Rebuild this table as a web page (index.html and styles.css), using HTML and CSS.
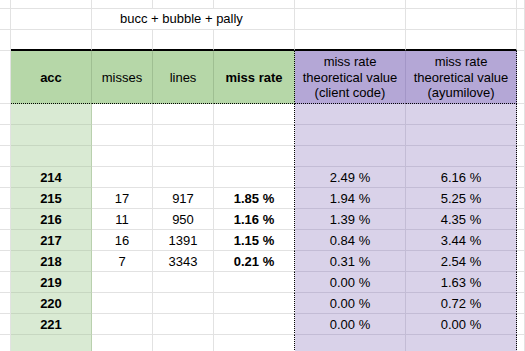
FILE: index.html
```html
<!DOCTYPE html>
<html>
<head>
<meta charset="utf-8">
<link rel="stylesheet" href="styles.css">
</head>
<body>
<div class="sheet">
  <div class="row r-top">
    <div class="c"></div><div class="c"></div><div class="c"></div><div class="c"></div><div class="c"></div><div class="c"></div><div class="c"></div><div class="c"></div>
  </div>
  <div class="row r-std">
    <div class="c"></div><div class="c"></div>
    <div class="c title">bucc + bubble + pally</div>
    <div class="c"></div><div class="c"></div><div class="c"></div>
  </div>
  <div class="row r-std">
    <div class="c"></div>
    <div class="c thick"></div><div class="c thick"></div><div class="c thick"></div><div class="c thick"></div><div class="c thick"></div><div class="c thick"></div>
    <div class="c"></div>
  </div>
  <div class="row r-head">
    <div class="c"></div>
    <div class="c hg b">acc</div>
    <div class="c hg">misses</div>
    <div class="c hg">lines</div>
    <div class="c hg b dl">miss rate</div>
    <div class="c hp">miss rate<br>theoretical value<br>(client code)</div>
    <div class="c hp dr">miss rate<br>theoretical value<br>(ayumilove)</div>
    <div class="c"></div>
  </div>
  <div class="row r-std"><div class="c"></div><div class="c g b"></div><div class="c"></div><div class="c"></div><div class="c dl"></div><div class="c p"></div><div class="c p dr"></div><div class="c"></div></div>
  <div class="row r-std"><div class="c"></div><div class="c g b"></div><div class="c"></div><div class="c"></div><div class="c dl"></div><div class="c p"></div><div class="c p dr"></div><div class="c"></div></div>
  <div class="row r-std"><div class="c"></div><div class="c g b"></div><div class="c"></div><div class="c"></div><div class="c dl"></div><div class="c p"></div><div class="c p dr"></div><div class="c"></div></div>
  <div class="row r-std"><div class="c"></div><div class="c g b">214</div><div class="c"></div><div class="c"></div><div class="c dl b"></div><div class="c p">2.49 %</div><div class="c p dr">6.16 %</div><div class="c"></div></div>
  <div class="row r-std"><div class="c"></div><div class="c g b">215</div><div class="c">17</div><div class="c">917</div><div class="c dl b">1.85 %</div><div class="c p">1.94 %</div><div class="c p dr">5.25 %</div><div class="c"></div></div>
  <div class="row r-std"><div class="c"></div><div class="c g b">216</div><div class="c">11</div><div class="c">950</div><div class="c dl b">1.16 %</div><div class="c p">1.39 %</div><div class="c p dr">4.35 %</div><div class="c"></div></div>
  <div class="row r-std"><div class="c"></div><div class="c g b">217</div><div class="c">16</div><div class="c">1391</div><div class="c dl b">1.15 %</div><div class="c p">0.84 %</div><div class="c p dr">3.44 %</div><div class="c"></div></div>
  <div class="row r-std"><div class="c"></div><div class="c g b">218</div><div class="c">7</div><div class="c">3343</div><div class="c dl b">0.21 %</div><div class="c p">0.31 %</div><div class="c p dr">2.54 %</div><div class="c"></div></div>
  <div class="row r-std"><div class="c"></div><div class="c g b">219</div><div class="c"></div><div class="c"></div><div class="c dl b"></div><div class="c p">0.00 %</div><div class="c p dr">1.63 %</div><div class="c"></div></div>
  <div class="row r-std"><div class="c"></div><div class="c g b">220</div><div class="c"></div><div class="c"></div><div class="c dl b"></div><div class="c p">0.00 %</div><div class="c p dr">0.72 %</div><div class="c"></div></div>
  <div class="row r-std"><div class="c"></div><div class="c g b">221</div><div class="c"></div><div class="c"></div><div class="c dl b"></div><div class="c p">0.00 %</div><div class="c p dr">0.00 %</div><div class="c"></div></div>
  <div class="row r-std"><div class="c"></div><div class="c g b"></div><div class="c"></div><div class="c"></div><div class="c dl"></div><div class="c p"></div><div class="c p dr"></div><div class="c"></div></div>
</div>
</body>
</html>
```
FILE: styles.css
```css
html, body {
  margin: 0;
  padding: 0;
  background: #ffffff;
}

.sheet {
  width: 525px;
  height: 351px;
  overflow: hidden;
  font-family: "Liberation Sans", Arial, sans-serif;
  font-size: 13px;
  color: #000000;
}

.row {
  display: grid;
  grid-template-columns: 11px 81px 61px 61px 81px 111px 111px 1fr;
}

.r-top { height: 9px; }
.r-std { height: 21px; }
.r-head { height: 53px; }

.c {
  box-sizing: border-box;
  border-right: 1px solid #e2e2e2;
  border-bottom: 1px solid #e2e2e2;
  display: flex;
  align-items: flex-end;
  justify-content: center;
  padding-bottom: 2px;
  line-height: 15px;
  white-space: nowrap;
  overflow: hidden;
}

.title {
  grid-column: span 3;
  justify-content: flex-start;
  padding-left: 28px;
  padding-bottom: 3px;
}

.thick {
  border-bottom: 2px solid #000000;
}

.b { font-weight: bold; }

/* header cells */
.hg {
  background: #b6d7a8;
  border-right-color: #9fbf92;
  border-bottom: 1px dotted #000000;
  align-items: center;
  padding-bottom: 0;
}

.hp {
  background: #b4a7d6;
  border-right-color: #a396c7;
  border-bottom: 1px dotted #000000;
  align-items: center;
  padding-bottom: 0;
  padding-top: 1px;
  text-align: center;
  line-height: 15.7px;
  white-space: normal;
}

/* data colours */
.g {
  background: #d9ead3;
  border-right-color: #b9d0ae;
  border-bottom-color: #c7d7c1;
}

.p {
  background: #d9d2e9;
  border-right-color: #c3bcd5;
  border-bottom-color: #c3bcd5;
}

/* dotted region edges */
.dl { border-right: 1px dotted #000000; }
.dr { border-right: 1px dotted #000000; }
```
